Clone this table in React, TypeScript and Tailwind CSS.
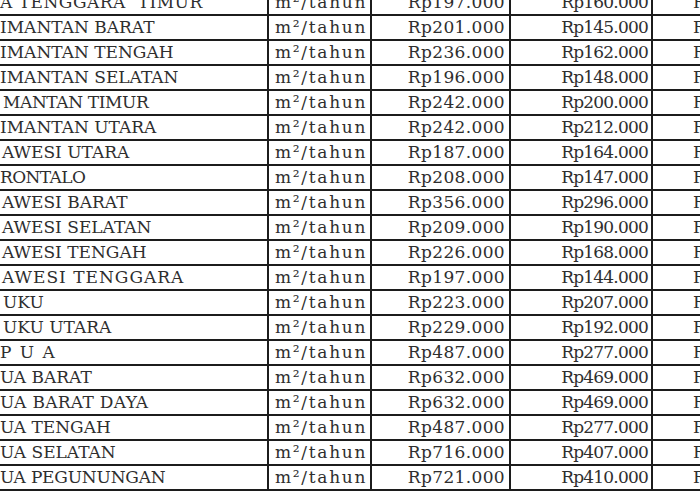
const rows: { name: string; cls?: string; a: string; b: string }[] = [
  { name: "A TENGGARA  TIMUR", cls: "tracking-[0.5px]", a: "Rp197.000", b: "Rp160.000" },
  { name: "IMANTAN BARAT", a: "Rp201.000", b: "Rp145.000" },
  { name: "IMANTAN TENGAH", a: "Rp236.000", b: "Rp162.000" },
  { name: "IMANTAN SELATAN", a: "Rp196.000", b: "Rp148.000" },
  { name: "MANTAN TIMUR", cls: "pl-[3px] tracking-[-0.4px]", a: "Rp242.000", b: "Rp200.000" },
  { name: "IMANTAN UTARA", a: "Rp242.000", b: "Rp212.000" },
  { name: "AWESI UTARA", cls: "pl-[2px]", a: "Rp187.000", b: "Rp164.000" },
  { name: "RONTALO", cls: "tracking-[-0.6px]", a: "Rp208.000", b: "Rp147.000" },
  { name: "AWESI BARAT", cls: "pl-[2px]", a: "Rp356.000", b: "Rp296.000" },
  { name: "AWESI SELATAN", cls: "pl-[2px]", a: "Rp209.000", b: "Rp190.000" },
  { name: "AWESI TENGAH", cls: "pl-[2px]", a: "Rp226.000", b: "Rp168.000" },
  { name: "AWESI TENGGARA", cls: "pl-[2px] tracking-[1px]", a: "Rp197.000", b: "Rp144.000" },
  { name: "UKU", cls: "pl-[3px]", a: "Rp223.000", b: "Rp207.000" },
  { name: "UKU UTARA", cls: "pl-[3px]", a: "Rp229.000", b: "Rp192.000" },
  { name: "P U A", cls: "[word-spacing:3px]", a: "Rp487.000", b: "Rp277.000" },
  { name: "UA BARAT", a: "Rp632.000", b: "Rp469.000" },
  { name: "UA BARAT DAYA", cls: "tracking-[0.3px]", a: "Rp632.000", b: "Rp469.000" },
  { name: "UA TENGAH", a: "Rp487.000", b: "Rp277.000" },
  { name: "UA SELATAN", a: "Rp716.000", b: "Rp407.000" },
  { name: "UA PEGUNUNGAN", cls: "tracking-[-0.2px]", a: "Rp721.000", b: "Rp410.000" },
];

export default function App() {
  return (
    <div className="w-[700px] h-[500px] overflow-hidden bg-white text-[#2e2e2e] font-['DejaVu_Serif',serif] text-[17px]">
      <div className="-mt-[9px]">
        {rows.map((r, i) => (
          <div key={i} className="flex h-[25px] border-b-2 border-[#1c1c1c] items-center whitespace-pre">
            <div className={`w-[269px] h-full flex items-center border-r-2 border-[#1c1c1c] overflow-hidden ${r.cls ?? ""}`}>
              {r.name}
            </div>
            <div className="w-[103px] h-full flex items-center pl-[6px] border-r-2 border-[#1c1c1c] tracking-[1.7px]">
              m²/tahun
            </div>
            <div className="w-[139px] h-full flex items-center justify-end pr-[4px] border-r-2 border-[#1c1c1c] tracking-[0.35px]">
              {r.a}
            </div>
            <div className="w-[142px] h-full flex items-center justify-end pr-[3px] border-r-2 border-[#1c1c1c] tracking-[-0.8px]">
              {r.b}
            </div>
            <div className="flex-1 h-full flex items-center pl-[40px] overflow-hidden">Rp</div>
          </div>
        ))}
      </div>
    </div>
  );
}
